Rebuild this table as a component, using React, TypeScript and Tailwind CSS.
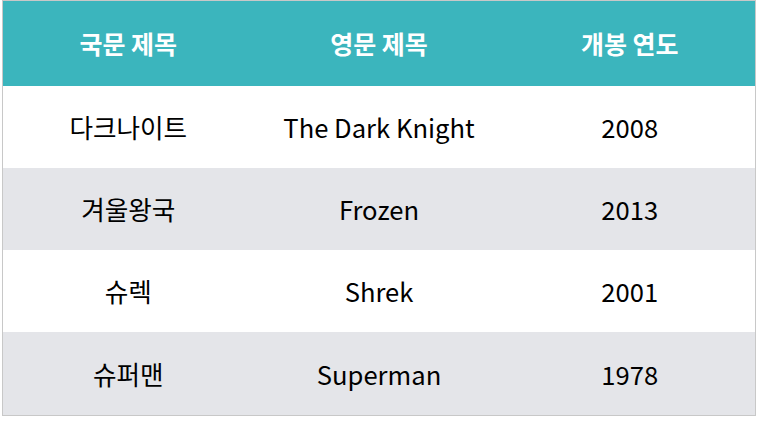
import React from 'react';

const MOVIES = [
  { ko: '다크나이트', en: 'The Dark Knight', year: '2008' },
  { ko: '겨울왕국', en: 'Frozen', year: '2013' },
  { ko: '슈렉', en: 'Shrek', year: '2001' },
  { ko: '슈퍼맨', en: 'Superman', year: '1978' },
];

export default function App() {
  return (
    <div className="w-[761px] h-[421px] bg-white pl-[2px] pr-[5px] font-['Noto_Sans_CJK_KR',sans-serif]">
      <table className="w-full border border-[#c8c8c8] border-collapse table-fixed">
        <thead>
          <tr className="bg-[#3bb5bd] text-white h-[85px]">
            <th className="text-[25px] font-bold">국문 제목</th>
            <th className="text-[25px] font-bold">영문 제목</th>
            <th className="text-[25px] font-bold">개봉 연도</th>
          </tr>
        </thead>
        <tbody>
          {MOVIES.map((m, i) => (
            <tr key={m.en} className={`h-[82px] text-[25.6px] text-black text-center ${i % 2 === 1 ? 'bg-[#e4e5e9]' : 'bg-white'} ${i === 3 ? 'h-[84px]' : ''}`}>
              <td className="pt-[2px]">{m.ko}</td>
              <td className="pt-[2px]">{m.en}</td>
              <td className="pt-[2px]">{m.year}</td>
            </tr>
          ))}
        </tbody>
      </table>
    </div>
  );
}
